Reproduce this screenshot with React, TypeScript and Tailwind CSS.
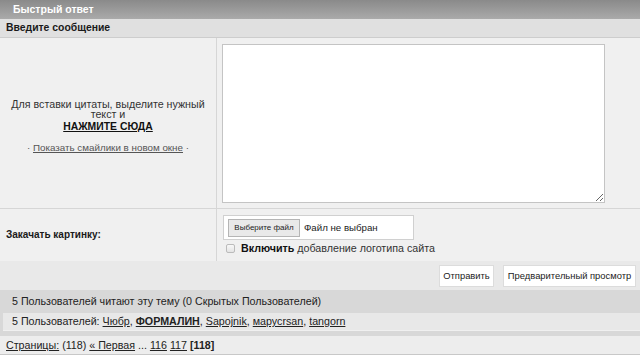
import React from 'react';

const App: React.FC = () => {
  return (
    <div className="w-[640px] h-[359px] bg-white font-['Liberation_Sans',Arial,sans-serif] text-[10.7px] text-[#333] leading-none overflow-hidden">
      {/* Header */}
      <div className="h-[19px] bg-gradient-to-b from-[#8a8a8a] to-[#aaaaaa] text-white font-bold text-[10.5px] pl-[13px] flex items-center">
        Быстрый ответ
      </div>
      <div className="h-[19px] bg-[#e0e0e0] border-b border-[#cdcdcd] font-bold text-[10.4px] text-[#1a1a1a] pl-[6px] flex items-center">
        Введите сообщение
      </div>

      {/* Message row */}
      <div className="flex h-[171px] bg-[#f0f0f0] border-b border-[#d6d6d6]">
        <div className="w-[217px] border-r border-[#d6d6d6] flex flex-col items-center justify-center text-center px-[4px] pt-[5px]">
          <p className="leading-[10.5px]">Для вставки цитаты, выделите нужный текст и</p>
          <p className="font-bold underline text-[10.4px] text-[#111] leading-[11px] mt-[1px]">НАЖМИТЕ СЮДА</p>
          <p className="mt-[11px] text-[9.8px] text-[#555]">
            · <span className="underline">Показать смайлики в новом окне</span> ·
          </p>
        </div>
        <div className="flex-1 pl-[5px] pt-[6px]">
          <textarea className="block w-[383px] h-[159px] bg-white border border-[#c4c4c4] outline-none" />
        </div>
      </div>

      {/* Upload row */}
      <div className="flex h-[52px] bg-[#f0f0f0]">
        <div className="w-[217px] border-r border-[#d6d6d6] flex items-center pl-[6px] font-bold text-[10px] text-[#1a1a1a]">
          Закачать картинку:
        </div>
        <div className="flex-1 pl-[6px] pt-[6px]">
          <div className="w-[191px] h-[25px] bg-white border border-[#d0d0d0] flex items-center pl-[4px] gap-[4px]">
            <div className="h-[18px] w-[72px] bg-[#e9e9e9] border border-[#b5b5b5] text-[8px] text-[#222] flex items-center justify-center">
              Выберите файл
            </div>
            <span className="text-[9.7px] text-[#222]">Файл не выбран</span>
          </div>
          <div className="flex items-center mt-[3px] gap-[6px] pl-[3px]">
            <div className="w-[9px] h-[9px] border border-[#bbb] bg-gradient-to-b from-[#f8f8f8] to-[#e4e4e4] rounded-[2px]" />
            <span>
              <b className="text-[#111]">Включить</b> добавление логотипа сайта
            </span>
          </div>
        </div>
      </div>

      {/* Buttons row */}
      <div className="h-[29px] bg-[#e9e9e9] flex items-center justify-end gap-[9px] pr-[4px]">
        <div className="h-[22px] w-[55px] bg-white border border-[#dcdcdc] flex items-center justify-center text-[9.4px] text-[#222]">
          Отправить
        </div>
        <div className="h-[22px] w-[133px] bg-white border border-[#dcdcdc] flex items-center justify-center text-[9.4px] text-[#222]">
          Предварительный просмотр
        </div>
      </div>

      {/* Active users */}
      <div className="bg-[#d8d8d8] pb-[5px]">
        <div className="h-[23px] flex items-center pl-[12px] text-[#222]">
          5 Пользователей читают эту тему (0 Скрытых Пользователей)
        </div>
        <div className="ml-[3px] h-[18px] bg-[#e8e8e8] border-b border-[#f0f0f0] flex items-center pl-[9px] text-[#222]">
          5 Пользователей:&nbsp;<span className="underline">Чюбр</span>,&nbsp;
          <span className="underline font-bold">ФОРМАЛИН</span>,&nbsp;
          <span className="underline">Sapojnik</span>,&nbsp;
          <span className="underline">марусrsan</span>,&nbsp;
          <span className="underline">tangorn</span>
        </div>
      </div>

      {/* Pages */}
      <div className="h-[19px] bg-[#ededed] border-b border-[#c8c8c8] flex items-center pl-[6px] text-[#222]">
        <span className="underline">Страницы:</span>&nbsp;(118)&nbsp;
        <span className="underline">« Первая</span>&nbsp;...&nbsp;
        <span className="underline">116</span>&nbsp;
        <span className="underline">117</span>&nbsp;
        <b>[118]</b>
      </div>
    </div>
  );
};

export default App;
